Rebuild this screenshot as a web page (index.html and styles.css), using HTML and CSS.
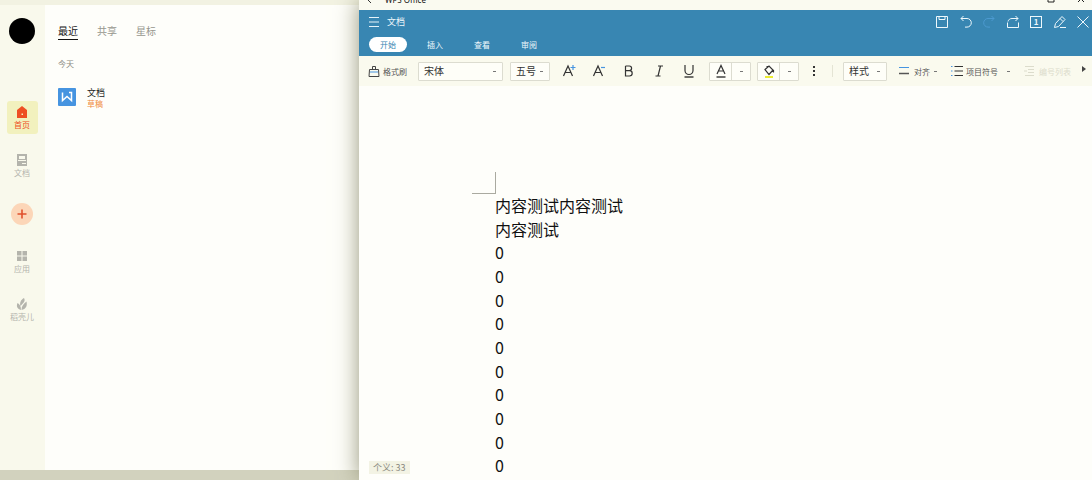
FILE: index.html
```html
<!DOCTYPE html>
<html lang="zh-CN">
<head>
<meta charset="utf-8">
<title>WPS Office</title>
<link rel="stylesheet" href="styles.css">
</head>
<body>
<div class="desktop">
  <section class="home">
    <div class="home-body">
      <nav class="rail">
        <div class="avatar"></div>
        <button class="rail-item active">
          <svg class="icon" viewBox="0 0 12 12"><path fill="currentColor" fill-rule="evenodd" d="M6 0l5 4v8H1V4zM5.500 7.500v1.500h1.500V7.500z"/></svg>
          <span>首页</span>
        </button>
        <button class="rail-item">
          <svg class="icon" viewBox="0 0 12 12"><path fill="currentColor" fill-rule="evenodd" d="M1 0h10v12H1zM3 2v3h6V2zM2 6v1h8V6zM6 9v1h4V9z"/></svg>
          <span>文档</span>
        </button>
        <button class="add" aria-label="新建">
          <svg class="icon" viewBox="0 0 12 12"><path stroke="currentColor" stroke-width="1.6" d="M6 1.500v9M1.500 6h9"/></svg>
        </button>
        <button class="rail-item">
          <svg class="icon" viewBox="0 0 12 12"><path fill="currentColor" d="M1 1h4.500v4.500H1zM6.500 1H11v4.500H6.500zM1 6.500h4.500V11H1zM6.500 6.500H11V11H6.500z"/></svg>
          <span>应用</span>
        </button>
        <button class="rail-item">
          <svg class="icon" viewBox="0 0 12 12"><path fill="currentColor" d="M8 0c1 1.500.8 3-.3 4.500L4.500 8C3.500 5 4.500 2 8 0zM1.500 5c2 1 3.500 3 3.500 7C1.500 11 0 8.500 1.500 5zM10.500 3.500c1 4.500-.5 7.500-5 8.500 0-4 2-6 5-8.500z"/></svg>
          <span>稻壳儿</span>
        </button>
      </nav>
      <main class="recent">
        <div class="filters">
          <button class="filter selected">最近</button>
          <button class="filter">共享</button>
          <button class="filter">星标</button>
        </div>
        <h2 class="day">今天</h2>
        <a class="file" href="#">
          <svg class="file-icon" viewBox="0 0 18 18"><rect width="18" height="18" rx="1" fill="#4694e0"/><path fill="none" stroke="#fff" stroke-width="1.500" d="M4.500 4.500v8L9 8.500l4.500 4v-8H11"/></svg>
          <span class="file-text"><span class="file-name">文档</span><span class="file-tag">草稿</span></span>
        </a>
      </main>
    </div>
  </section>

  <section class="editor">
    <div class="titlebar">
      <svg class="back" viewBox="0 0 8 8"><path fill="none" stroke="#333" d="M5 0L1 4l4 4"/></svg>
      <span class="app-name">WPS Office</span>
      <svg class="window-icon" viewBox="0 0 8 8"><path fill="none" stroke="#222" d="M1 1h6v6H1z"/></svg>
      <svg class="window-icon" viewBox="0 0 8 8"><path fill="none" stroke="#222" d="M1 1l6 6M7 1L1 7"/></svg>
    </div>
    <header class="header">
      <div class="doc-row">
        <button class="menu" aria-label="菜单"><svg viewBox="0 0 12 12"><path stroke="#e6f4fa" d="M1 1.500h10M1 6h10M1 10.500h10"/></svg></button>
        <span class="doc-name">文档</span>
        <div class="actions">
          <button aria-label="保存"><svg viewBox="0 0 14 14"><path d="M1.500 1.500h11v11h-11zM4 1.500v3h6v-3"/></svg></button>
          <button aria-label="撤销"><svg viewBox="0 0 14 14"><path d="M4.500 1L2 3.500 4.500 6M2 3.500h6a4.300 4.300 0 0 1 0 8.600H6"/></svg></button>
          <button class="dim" aria-label="恢复"><svg viewBox="0 0 14 14"><path d="M9.500 1L12 3.500 9.500 6M12 3.500H6a4.300 4.300 0 0 0 0 8.600h2"/></svg></button>
          <button aria-label="分享"><svg viewBox="0 0 14 14"><path d="M1.500 7.500v5h11v-5M2 6.500c.5-2 2-3 4-3h6M9.500 1L12 3.500 9.500 6"/></svg></button>
          <button class="page-count" aria-label="窗口"><span>1</span></button>
          <button aria-label="编辑"><svg viewBox="0 0 14 14"><path d="M1.500 12.500l1-4 6.500-7 3 3-6.500 7zM7 3.500l3 3M7 12.500h6"/></svg></button>
          <button aria-label="关闭"><svg viewBox="0 0 14 14"><path d="M1.500 1.500l11 11M12.500 1.500l-11 11"/></svg></button>
        </div>
      </div>
      <nav class="tabs">
        <button class="tab current">开始</button>
        <button class="tab">插入</button>
        <button class="tab">查看</button>
        <button class="tab">审阅</button>
      </nav>
    </header>

    <div class="toolbar">
      <button class="tool brush"><svg class="icon" viewBox="0 0 12 12"><path fill="none" stroke="#444" d="M1.500 4.500h9l.5 7H1zM4.500 4.500v-3h3v3"/><path stroke="#4694e0" d="M2 7h8"/></svg><span>格式刷</span></button>
      <select class="pick font" aria-label="字体"><option>宋体</option></select>
      <select class="pick size" aria-label="字号"><option>五号</option></select>
      <div class="letters">
        <button class="letter" aria-label="增大字号"><svg viewBox="0 0 14 14"><path d="M1.500 12L6 2l4.500 10M3 8.500h6"/><path class="blue" d="M11 1v5M8.500 3.500h5"/></svg></button>
        <button class="letter" aria-label="减小字号"><svg viewBox="0 0 14 14"><path d="M1.500 12L6 2l4.500 10M3 8.500h6"/><path class="blue" d="M9 3.500h4"/></svg></button>
        <button class="letter" aria-label="加粗"><svg viewBox="0 0 14 14"><path d="M3.500 2v10h4a2.700 2.700 0 0 0 0-5.400h-4M3.500 2h3.800a2.300 2.300 0 0 1 0 4.600"/></svg></button>
        <button class="letter" aria-label="倾斜"><svg viewBox="0 0 14 14"><path d="M6 2h5M3.500 12h5M8.500 2L6 12"/></svg></button>
        <button class="letter" aria-label="下划线"><svg viewBox="0 0 14 14"><path d="M3 1v5.500a4 4 0 0 0 8 0V1"/><path class="dark" d="M2.500 13h9"/></svg></button>
      </div>
      <div class="split">
        <button class="letter" aria-label="字体颜色"><svg viewBox="0 0 14 14"><path d="M3 10L7 1.500 11 10M4.500 7h5"/><path class="dark" d="M2.500 13h9"/></svg></button>
        <button class="drop" aria-label="更多颜色"></button>
      </div>
      <div class="split">
        <button class="letter" aria-label="填充"><svg viewBox="0 0 14 14"><path d="M3 5.500L7 2l4 4-4 4.500zM4.500 2.500h3M11.500 6v2.500"/><path class="yellow" d="M3 13h8"/></svg></button>
        <button class="drop" aria-label="更多填充"></button>
      </div>
      <button class="more" aria-label="更多"><svg viewBox="0 0 4 12"><path fill="#333" d="M1 1h2v2H1zM1 5h2v2H1zM1 9h2v2H1z"/></svg></button>
      <span class="rule"></span>
      <select class="pick style" aria-label="样式"><option>样式</option></select>
      <button class="tool align"><svg class="icon" viewBox="0 0 12 12"><path stroke="#4694e0" d="M0 2.500h10"/><path stroke="#555" stroke-width="1.500" d="M0 8.500h10"/></svg><span>对齐</span></button>
      <button class="tool bullets"><svg class="icon" viewBox="0 0 12 12"><path stroke="#333" d="M3.500 1.500H12M3.500 6H12M3.500 10.500H12"/><path stroke="#4694e0" d="M0 1.500h1.500M0 6h1.500M0 10.500h1.500"/></svg><span>项目符号</span></button>
      <button class="tool numbers"><svg class="icon" viewBox="0 0 12 12"><path stroke="currentColor" d="M1 1.500h9M4 4.500h6M4 7.500h6M1 10.500h9M0 6h3"/></svg><span>编号列表</span></button>
      <button class="next" aria-label="向右滚动"><svg viewBox="0 0 6 6"><path fill="#444" d="M1 0l4 3-4 3z"/></svg></button>
    </div>

    <article class="page">
      <div class="margin-mark"></div>
      <div class="lines">
        <p>内容测试内容测试</p>
        <p>内容测试</p>
        <p>0</p><p>0</p><p>0</p><p>0</p><p>0</p>
        <p>0</p><p>0</p><p>0</p><p>0</p><p>0</p>
      </div>
      <span class="word-count">个义: 33</span>
    </article>
  </section>
</div>
</body>
</html>
```

FILE: styles.css
```css
* { box-sizing: border-box; }

body {
  margin: 0;
  font-family: "Noto Sans CJK SC", sans-serif;
  font-size: 8px;
  color: #222;
}

button, select {
  margin: 0;
  padding: 0;
  border: 0;
  background: none;
  font: inherit;
  color: inherit;
}

svg { display: block; }
.icon { width: 12px; height: 12px; flex: none; }

.desktop {
  display: flex;
  height: 100vh;
  overflow: hidden;
}

/* Home window */
.home {
  flex: 0 0 359px;
  display: flex;
  padding: 5px 0 10px;
  background: linear-gradient(#f2f2e2 50%, #d2d2be 50%);
}

.home-body { flex: 1; display: flex; background: #fefefa; }

.rail {
  flex: 0 0 45px;
  display: flex;
  flex-direction: column;
  align-items: center;
  padding: 13px 1px 0 0;
  background: #f9f9ec;
  color: #b4b4ac;
}

.avatar {
  width: 26px;
  height: 26px;
  margin-bottom: 57px;
  border-radius: 50%;
  background: #000;
}

.rail-item {
  display: flex;
  flex-direction: column;
  align-items: center;
  gap: 1px;
  width: 31px;
  height: 33px;
  margin-bottom: 15px;
  padding-top: 5px;
  border-radius: 3px;
  line-height: 12px;
}

.rail-item span { white-space: nowrap; }
.rail-item.active { background: #f2f1be; color: #ee4f22; }

.add {
  display: grid;
  place-items: center;
  width: 22px;
  height: 22px;
  margin: 6px 0 20px;
  border-radius: 50%;
  background: #fcd6b8;
  color: #e0502c;
}

.recent { flex: 1; padding: 18px 13px; }
.filters { display: flex; gap: 19px; }

.filter {
  border-bottom: 1px solid transparent;
  font-size: 10px;
  line-height: 16px;
  color: #96968e;
}

.filter.selected { border-color: #111; color: #111; }

.day {
  margin: 16px 0 15px;
  font-size: 8px;
  font-weight: 400;
  line-height: 16px;
  color: #8a8a82;
}

.file { display: flex; gap: 11px; color: #222; text-decoration: none; }
.file-icon { width: 18px; height: 18px; margin-top: 1px; }
.file-text { display: flex; flex-direction: column; }
.file-name { font-size: 9px; line-height: 11px; }
.file-tag { font-size: 8px; line-height: 12px; color: #f08a3c; }

/* Editor window */
.editor {
  flex: 1;
  min-width: 0;
  display: flex;
  flex-direction: column;
  background: #fefefa;
  box-shadow: 0 0 22px #96967a;
}

.titlebar {
  display: flex;
  align-items: flex-end;
  height: 10px;
  padding: 0 7px;
  overflow: hidden;
  background: #fafaf0;
}

.back { width: 8px; height: 8px; margin-bottom: 7px; }

.app-name {
  flex: 1;
  margin-left: 11px;
  font-family: "Noto Sans", sans-serif;
  font-size: 8px;
  line-height: 20px;
  color: #111;
}

.window-icon { width: 8px; height: 8px; margin: 0 0 7px 22px; }

.header { background: #3886b2; color: #eef8fc; }
.doc-row { display: flex; align-items: center; height: 23px; padding: 0 2px 0 9px; }
.menu svg { width: 12px; height: 12px; }
.doc-name { flex: 1; margin-left: 7px; font-size: 9px; }

.actions { display: flex; justify-content: space-between; width: 155px; }
.actions button { width: 14px; height: 14px; }
.actions svg { width: 14px; height: 14px; fill: none; stroke: currentColor; }
.actions .dim { color: #4c9ad0; }
.actions .page-count { padding: 1px; line-height: 10px; font-weight: 700; }
.page-count span { display: block; border: 1px solid; }

.tabs { display: flex; align-items: center; gap: 9px; height: 23px; padding-left: 10px; }

.tab {
  width: 38px;
  height: 15px;
  border-radius: 8px;
  line-height: 16px;
}

.tab.current { background: #fff; color: #3886b2; }

.toolbar {
  display: flex;
  align-items: center;
  height: 30px;
  padding: 0 5px 0 9px;
  background: #fafaee;
}

.tool {
  display: flex;
  align-items: center;
  gap: 3px;
  flex: none;
  white-space: nowrap;
  color: #555;
}

.brush { width: 50px; }
.align { width: 52px; margin-left: 12px; }
.bullets { width: 73px; }
.numbers { color: #dcdccc; }

.pick, .split {
  flex: none;
  height: 19px;
  border: 1px solid #dcdcd0;
  border-radius: 1px;
  background-color: #fefef8;
}

.pick { appearance: none; padding-left: 5px; font-size: 10px; line-height: 16px; color: #333; }

.pick, .drop, .align, .bullets {
  background-image: linear-gradient(#777, #777);
  background-repeat: no-repeat;
  background-position: right 6px center;
  background-size: 3px 1px;
}

.drop { background-position: center; }
.align, .bullets { background-position: right 14px center; }

.font { width: 85px; }
.size { width: 40px; margin-left: 7px; }
.style { width: 44px; margin-left: 10px; }

.letters { display: flex; margin: 0 5px 0 4px; }
.letter { display: grid; place-items: center; width: 30px; height: 17px; }
.letter svg { width: 14px; height: 14px; fill: none; stroke: #333; stroke-width: 1.2; }
.letter .blue { stroke: #4694e0; }
.letter .dark { stroke: #111; }
.letter .yellow { stroke: #ecec30; stroke-width: 2; }

.split { display: flex; width: 42px; margin-right: 6px; }
.split .letter { width: 22px; border-right: 1px solid #dcdcd0; }
.drop { flex: 1; }

.more { display: grid; place-items: center; width: 17px; }
.more svg { width: 4px; height: 12px; }
.rule { width: 1px; height: 12px; margin-left: 10px; background: #e4e4d4; }
.next { margin-left: auto; padding-bottom: 4px; }
.next svg { width: 6px; height: 6px; }

.page {
  position: relative;
  flex: 1;
  display: flex;
  flex-direction: column;
  padding: 86px 24px 2px 113px;
}

.margin-mark {
  width: 24px;
  height: 22px;
  border: solid #aaaaa0;
  border-width: 0 1px 1px 0;
}

.lines {
  flex: 1;
  display: grid;
  grid-auto-rows: 1fr;
  padding-left: 23px;
  font-size: 16px;
  line-height: 22px;
  color: #111;
}

.lines p { margin: 0; }

.word-count {
  position: absolute;
  left: 10px;
  bottom: 6px;
  padding: 0 4px;
  background: #f3f3e4;
  font-size: 9px;
  line-height: 13px;
  color: #8a8a80;
}
```
